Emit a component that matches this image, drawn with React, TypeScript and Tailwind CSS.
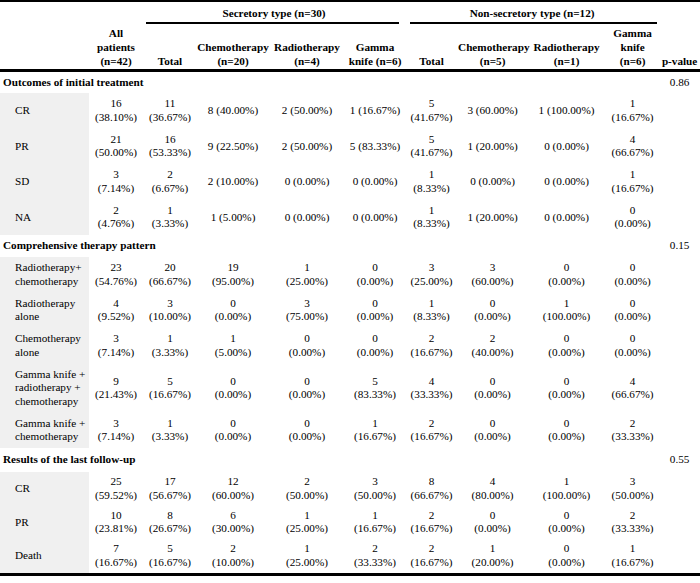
import React from "react";

// One cell = lines separated by "|"
type Row = { label: string; cells: string[] };
type Section = {
  title: string;
  p: string;
  titlePad: string;
  rowPad: string;
  rows: Row[];
};

const sections: Section[] = [
  {
    title: "Outcomes of initial treatment",
    p: "0.86",
    titlePad: "py-[3.75px]",
    rowPad: "py-[4.25px]",
    rows: [
      {
        label: "CR",
        cells: ["16|(38.10%)", "11|(36.67%)", "8 (40.00%)", "2 (50.00%)", "1 (16.67%)", "5|(41.67%)", "3 (60.00%)", "1 (100.00%)", "1|(16.67%)"],
      },
      {
        label: "PR",
        cells: ["21|(50.00%)", "16|(53.33%)", "9 (22.50%)", "2 (50.00%)", "5 (83.33%)", "5|(41.67%)", "1 (20.00%)", "0 (0.00%)", "4|(66.67%)"],
      },
      {
        label: "SD",
        cells: ["3|(7.14%)", "2|(6.67%)", "2 (10.00%)", "0 (0.00%)", "0 (0.00%)", "1|(8.33%)", "0 (0.00%)", "0 (0.00%)", "1|(16.67%)"],
      },
      {
        label: "NA",
        cells: ["2|(4.76%)", "1|(3.33%)", "1 (5.00%)", "0 (0.00%)", "0 (0.00%)", "1|(8.33%)", "1 (20.00%)", "0 (0.00%)", "0|(0.00%)"],
      },
    ],
  },
  {
    title: "Comprehensive therapy pattern",
    p: "0.15",
    titlePad: "py-[4.25px]",
    rowPad: "py-[4.25px]",
    rows: [
      {
        label: "Radiotherapy+|chemotherapy",
        cells: ["23|(54.76%)", "20|(66.67%)", "19|(95.00%)", "1|(25.00%)", "0|(0.00%)", "3|(25.00%)", "3|(60.00%)", "0|(0.00%)", "0|(0.00%)"],
      },
      {
        label: "Radiotherapy|alone",
        cells: ["4|(9.52%)", "3|(10.00%)", "0|(0.00%)", "3|(75.00%)", "0|(0.00%)", "1|(8.33%)", "0|(0.00%)", "1|(100.00%)", "0|(0.00%)"],
      },
      {
        label: "Chemotherapy|alone",
        cells: ["3|(7.14%)", "1|(3.33%)", "1|(5.00%)", "0|(0.00%)", "0|(0.00%)", "2|(16.67%)", "2|(40.00%)", "0|(0.00%)", "0|(0.00%)"],
      },
      {
        label: "Gamma knife +|radiotherapy +|chemotherapy",
        cells: ["9|(21.43%)", "5|(16.67%)", "0|(0.00%)", "0|(0.00%)", "5|(83.33%)", "4|(33.33%)", "0|(0.00%)", "0|(0.00%)", "4|(66.67%)"],
      },
      {
        label: "Gamma knife +|chemotherapy",
        cells: ["3|(7.14%)", "1|(3.33%)", "0|(0.00%)", "0|(0.00%)", "1|(16.67%)", "2|(16.67%)", "0|(0.00%)", "0|(0.00%)", "2|(33.33%)"],
      },
    ],
  },
  {
    title: "Results of the last follow-up",
    p: "0.55",
    titlePad: "py-[5.25px]",
    rowPad: "py-[3.25px]",
    rows: [
      {
        label: "CR",
        cells: ["25|(59.52%)", "17|(56.67%)", "12|(60.00%)", "2|(50.00%)", "3|(50.00%)", "8|(66.67%)", "4|(80.00%)", "1|(100.00%)", "3|(50.00%)"],
      },
      {
        label: "PR",
        cells: ["10|(23.81%)", "8|(26.67%)", "6|(30.00%)", "1|(25.00%)", "1|(16.67%)", "2|(16.67%)", "0|(0.00%)", "0|(0.00%)", "2|(33.33%)"],
      },
      {
        label: "Death",
        cells: ["7|(16.67%)", "5|(16.67%)", "2|(10.00%)", "1|(25.00%)", "2|(33.33%)", "2|(16.67%)", "1|(20.00%)", "0|(0.00%)", "1|(16.67%)"],
      },
    ],
  },
];

const subHeads = [
  "Total",
  "Chemotherapy|(n=20)",
  "Radiotherapy|(n=4)",
  "Gamma|knife (n=6)",
  "Total",
  "Chemotherapy|(n=5)",
  "Radiotherapy|(n=1)",
  "Gamma|knife|(n=6)",
];

const colWidths = ["w-[89px]", "w-[54px]", "w-[54px]", "w-[72px]", "w-[76px]", "w-[60px]", "w-[53px]", "w-[69px]", "w-[79px]", "w-[53px]", "w-[41px]"];

const Lines = ({ text }: { text: string }) => (
  <>
    {text.split("|").map((l, i) => (
      <div key={i}>{l}</div>
    ))}
  </>
);

export default function App() {
  return (
    <div className="w-[700px] h-[583px] bg-white text-black font-[family-name:'Liberation_Serif','Times_New_Roman',serif] text-[11.2px] overflow-hidden">
      <div className="border-t-2 border-b-[3px] border-black">
        <table className="w-[700px] table-fixed border-separate border-spacing-0">
          <colgroup>
            {colWidths.map((w, i) => (
              <col key={i} className={w} />
            ))}
          </colgroup>
          <thead className="font-bold leading-[14px]">
            <tr>
              <th rowSpan={2} className="border-b-[3px] border-black align-bottom pb-[1px]" />
              <th rowSpan={2} className="border-b-[3px] border-black align-bottom pb-[1px] font-bold whitespace-nowrap">
                <Lines text="All|patients|(n=42)" />
              </th>
              <th colSpan={4} className="pt-[4px] align-top whitespace-nowrap">
                <div>Secretory type (n=30)</div>
                <div className="h-[2px] mt-[2px] ml-[3px] mr-[6px] bg-black" />
              </th>
              <th colSpan={4} className="pt-[4px] align-top whitespace-nowrap">
                <div>Non-secretory type (n=12)</div>
                <div className="h-[2px] mt-[2px] ml-[5px] mr-[2px] bg-black" />
              </th>
              <th rowSpan={2} className="border-b-[3px] border-black align-bottom pb-[1px] whitespace-nowrap">
                p-value
              </th>
            </tr>
            <tr>
              {subHeads.map((h, i) => (
                <th key={i} className="border-b-[3px] border-black align-bottom pt-[2px] pb-[1px] whitespace-nowrap">
                  <Lines text={h} />
                </th>
              ))}
            </tr>
          </thead>
          <tbody className="leading-[13.5px]">
            {sections.map((s) => (
              <React.Fragment key={s.title}>
                <tr>
                  <td colSpan={10} className={`${s.titlePad} pl-[3px] text-left font-bold whitespace-nowrap`}>
                    {s.title}
                  </td>
                  <td className={`${s.titlePad} text-center`}>{s.p}</td>
                </tr>
                {s.rows.map((r) => (
                  <tr key={r.label}>
                    <td className={`${s.rowPad} pl-[15px] bg-[#f0f0f0] text-left align-middle whitespace-nowrap`}>
                      <Lines text={r.label} />
                    </td>
                    {r.cells.map((c, i) => (
                      <td key={i} className={`${s.rowPad} text-center align-middle whitespace-nowrap`}>
                        <Lines text={c} />
                      </td>
                    ))}
                    <td />
                  </tr>
                ))}
              </React.Fragment>
            ))}
          </tbody>
        </table>
      </div>
    </div>
  );
}
